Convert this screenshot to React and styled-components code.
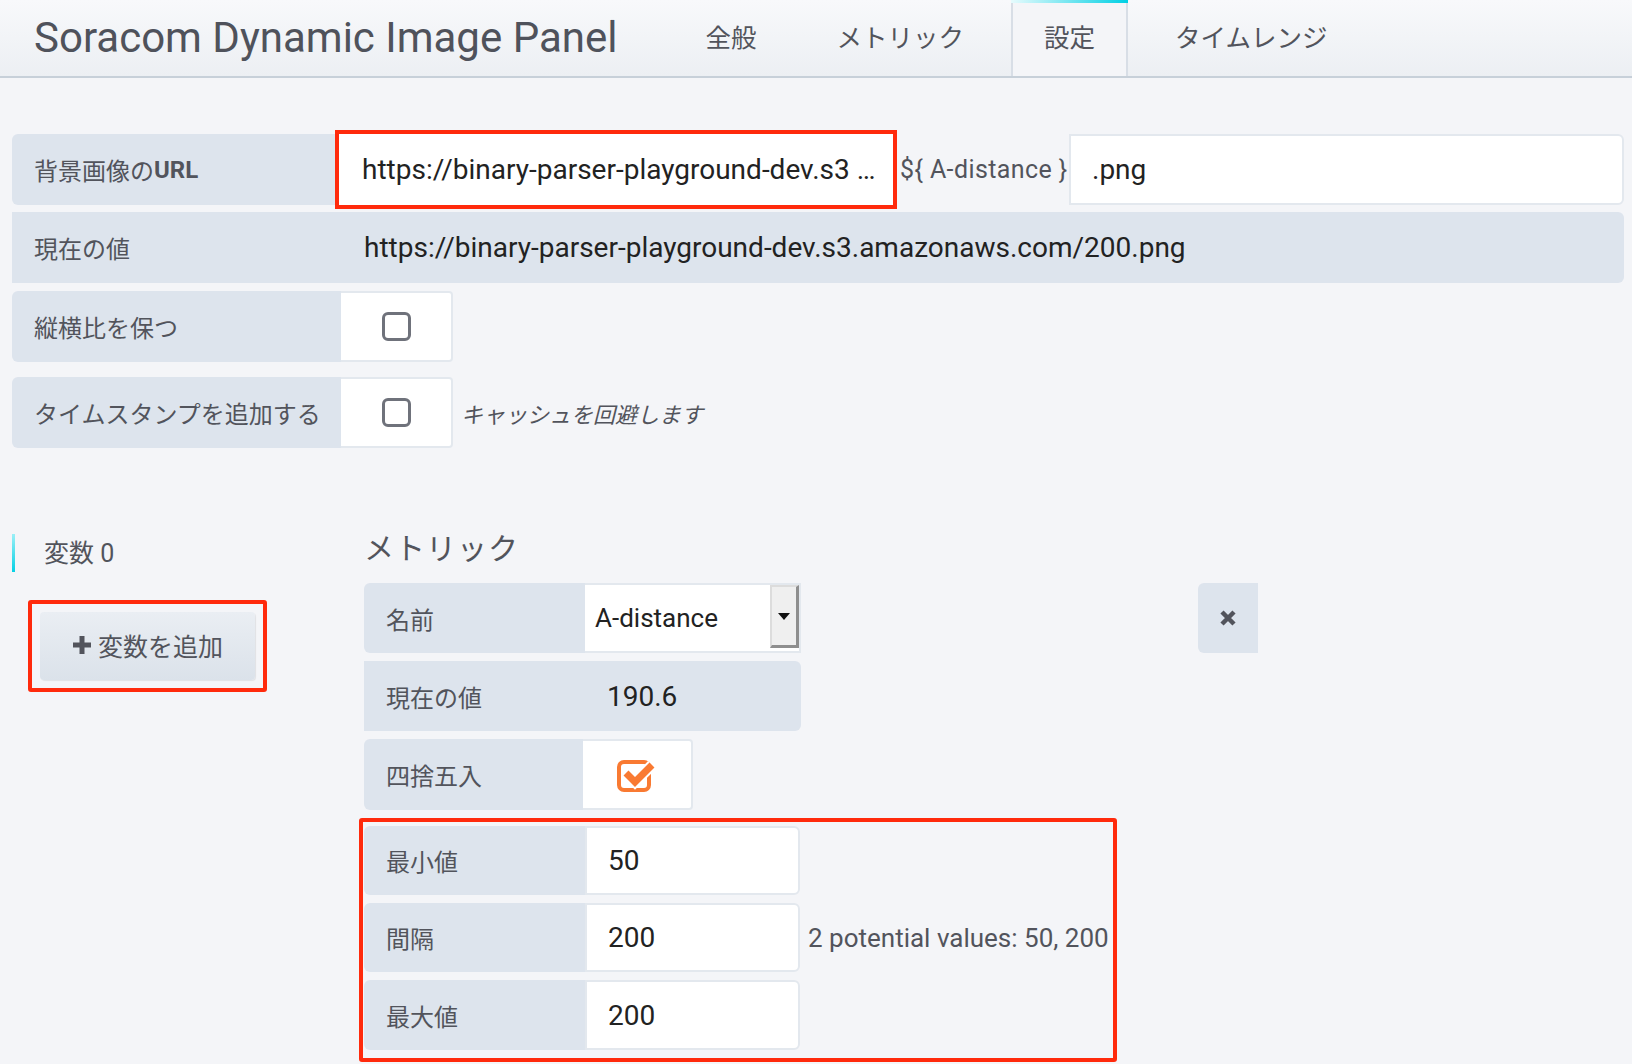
import React from 'react';
import styled, { createGlobalStyle } from 'styled-components';

const GlobalStyle = createGlobalStyle`
  body {
    margin: 0;
    background: #f4f5f8;
    font-family: Roboto, "Noto Sans CJK JP", sans-serif;
    color: #52545c;
  }
`;

const Header = styled.div`
  display: flex;
  height: 76px;
  background: linear-gradient(#f8f9fb, #eceff3);
  border-bottom: 2px solid #c7d0d9;
`;

const Title = styled.h1`
  margin: 0 55px 0 34px;
  font-size: 42px;
  font-weight: 400;
  line-height: 76px;
  color: #4f525b;
  white-space: nowrap;
`;

const Tabs = styled.div`
  display: flex;
  gap: 14px;
  align-self: flex-end;
`;

const Tab = styled.div`
  position: relative;
  height: 76px;
  padding: 0 31px;
  margin-bottom: ${(p) => (p.$active ? '-2px' : '0')};
  font-size: 25.5px;
  line-height: 76px;
  color: #52545c;
  background: ${(p) => (p.$active ? '#f4f5f8' : 'transparent')};
  border-left: 2px solid ${(p) => (p.$active ? '#d8dee6' : 'transparent')};
  border-right: 2px solid ${(p) => (p.$active ? '#d8dee6' : 'transparent')};
  box-sizing: border-box;

  &::before {
    content: '';
    display: ${(p) => (p.$active ? 'block' : 'none')};
    position: absolute;
    left: -2px;
    right: -2px;
    top: 0;
    height: 3px;
    background: linear-gradient(90deg, #e6fbfd, #00d0e4);
  }
`;

const Content = styled.div`
  padding: 56px 8px 0 12px;
`;

const Row = styled.div`
  display: flex;
  align-items: center;
  height: ${(p) => p.$h || 71}px;
  margin-top: ${(p) => p.$mt || 0}px;
  ${(p) => p.$fill && `
    background: #dde4ed;
    border-radius: 6px;
  `}
`;

const Label = styled.div`
  display: flex;
  align-items: center;
  align-self: stretch;
  width: ${(p) => p.$w}px;
  flex-shrink: 0;
  padding-left: 22px;
  box-sizing: border-box;
  background: #dde4ed;
  border-radius: ${(p) => (p.$fill ? '0' : '6px 0 0 6px')};
  font-size: 24px;
  color: #52545c;

  b {
    font-weight: 700;
  }
`;

const TextInput = styled.div`
  display: flex;
  align-items: center;
  align-self: stretch;
  width: ${(p) => p.$w}px;
  ${(p) => p.$grow && 'flex: 1;'}
  padding-left: 21px;
  box-sizing: border-box;
  background: #fff;
  border: 2px solid #e3e8ee;
  border-radius: ${(p) => (p.$round ? '0 6px 6px 0' : '0')};
  font-size: 28px;
  color: #222;
  white-space: nowrap;
  overflow: hidden;
  ${(p) => p.$marked && `
    border-color: #fff;
    outline: 4px solid #ff2a0c;
    outline-offset: 0;
  `}
`;

const Value = styled.div`
  padding-left: ${(p) => p.$pl}px;
  font-size: 28px;
  color: #222;
  white-space: nowrap;
`;

const Suffix = styled.span`
  width: 169px;
  margin-left: 7px;
  font-size: 25px;
  letter-spacing: 0.4px;
  color: #52545c;
  white-space: nowrap;
`;

const CheckCell = styled.div`
  display: flex;
  align-items: center;
  justify-content: center;
  align-self: stretch;
  width: ${(p) => p.$w}px;
  box-sizing: border-box;
  background: #fff;
  border: 2px solid #e3e8ee;
  border-left: none;
  border-radius: 0 4px 4px 0;
`;

const EmptyBox = styled.span`
  width: 29px;
  height: 29px;
  box-sizing: border-box;
  border: 3px solid #6f727b;
  border-radius: 6px;
`;

const Hint = styled.span`
  margin-left: 8px;
  font-size: 22px;
  font-style: italic;
  color: #52545c;
  white-space: nowrap;
`;

const Section = styled.div`
  display: flex;
  margin-top: 77px;
`;

const LeftCol = styled.div`
  width: 352px;
  flex-shrink: 0;
`;

const VarTitle = styled.div`
  margin-top: 9px;
  height: 38px;
  padding-left: 29px;
  border-left: 3px solid;
  border-image: linear-gradient(#9ff0f7, #00d0e4) 1;
  font-size: 25px;
  line-height: 40px;
  color: #52545c;
`;

const Marked = styled.div`
  display: inline-block;
  border: 4px solid #ff2a0c;
  border-radius: 3px;
  padding: ${(p) => p.$pad};
  margin: ${(p) => p.$m};
  width: ${(p) => (p.$w ? `${p.$w}px` : 'auto')};
  box-sizing: border-box;
`;

const AddButton = styled.button`
  display: flex;
  align-items: center;
  justify-content: center;
  gap: 6px;
  width: 215px;
  height: 68px;
  padding: 0 0 2px;
  border: none;
  border-radius: 4px;
  background: linear-gradient(#eaeef3, #dbe2ea);
  box-shadow: 1px 1px 1px rgba(0, 0, 0, 0.08);
  font-family: inherit;
  font-size: 25px;
  color: #52545c;
`;

const RightCol = styled.div`
  flex: 1;
`;

const SubTitle = styled.h3`
  margin: 4px 0 0;
  font-size: 30px;
  font-weight: 400;
  line-height: 40px;
  letter-spacing: 1px;
  color: #52545c;
`;

const MetricArea = styled.div`
  display: flex;
  align-items: flex-start;
  margin-top: 14px;
`;

const MetricCol = styled.div`
  display: flex;
  flex-direction: column;
  gap: 8px;
  width: 834px;
  flex-shrink: 0;
`;

const Group = styled.div`
  display: flex;
  flex-direction: column;
  gap: 8px;
`;

const SelectBox = styled.div`
  display: flex;
  align-items: stretch;
  align-self: stretch;
  background: #fff;
  border: 2px solid #e3e8ee;
  border-left: none;
`;

const SelectText = styled.div`
  display: flex;
  align-items: center;
  width: 175px;
  padding-left: 10px;
  font-size: 26px;
  color: #222;
`;

const DropButton = styled.div`
  display: flex;
  align-items: center;
  justify-content: center;
  width: 29px;
  margin: 0 0 3px 0;
  box-sizing: border-box;
  background: #efefef;
  border-top: 2px solid #dcdcdc;
  border-left: 2px solid #dcdcdc;
  border-right: 3px solid #8e8e8e;
  border-bottom: 3px solid #8e8e8e;

  &::after {
    content: '';
    border-left: 6px solid transparent;
    border-right: 6px solid transparent;
    border-top: 7px solid #111;
  }
`;

const RemoveButton = styled.div`
  display: flex;
  align-items: center;
  justify-content: center;
  width: 60px;
  height: 70px;
  background: #dde4ed;
  border-radius: 6px 0 0 6px;
`;

const HintPlain = styled.span`
  margin-left: 8px;
  font-size: 26px;
  color: #52545c;
  white-space: nowrap;
`;

const CheckedIcon = () => (
  <svg width="40" height="36" viewBox="0 0 40 36">
    <rect x="2" y="5" width="30" height="28" rx="5" fill="none" stroke="#f97a32" strokeWidth="4" />
    <path d="M9 16 L18 25 L35 8" fill="none" stroke="#fff" strokeWidth="11" />
    <path d="M9 16 L18 25 L35 8" fill="none" stroke="#f97a32" strokeWidth="7" strokeLinejoin="miter" />
  </svg>
);

const PlusIcon = () => (
  <svg width="20" height="20" viewBox="0 0 20 20">
    <path d="M10 1 V19 M1 10 H19" stroke="#52545c" strokeWidth="5" />
  </svg>
);

const CloseIcon = () => (
  <svg width="16" height="16" viewBox="0 0 16 16">
    <path d="M2 2 L14 14 M14 2 L2 14" stroke="#52545c" strokeWidth="4.5" />
  </svg>
);

export default function App() {
  return (
    <>
      <GlobalStyle />
      <Header>
        <Title>Soracom Dynamic Image Panel</Title>
        <Tabs>
          <Tab>全般</Tab>
          <Tab>メトリック</Tab>
          <Tab $active>設定</Tab>
          <Tab>タイムレンジ</Tab>
        </Tabs>
      </Header>

      <Content>
        <Row>
          <Label $w={327}>
            背景画像の<b>URL</b>
          </Label>
          <TextInput $w={554} $marked>
            https://binary-parser-playground-dev.s3 …
          </TextInput>
          <Suffix>{'${ A-distance }'}</Suffix>
          <TextInput $grow $round>.png</TextInput>
        </Row>
        <Row $fill $mt={7}>
          <Label $w={323} $fill>現在の値</Label>
          <Value $pl={29}>https://binary-parser-playground-dev.s3.amazonaws.com/200.png</Value>
        </Row>
        <Row $mt={8}>
          <Label $w={329}>縦横比を保つ</Label>
          <CheckCell $w={112}>
            <EmptyBox />
          </CheckCell>
        </Row>
        <Row $mt={15}>
          <Label $w={329}>タイムスタンプを追加する</Label>
          <CheckCell $w={112}>
            <EmptyBox />
          </CheckCell>
          <Hint>キャッシュを回避します</Hint>
        </Row>

        <Section>
          <LeftCol>
            <VarTitle>変数 0</VarTitle>
            <Marked $pad="8px" $m="28px 0 0 16px">
              <AddButton>
                <PlusIcon />
                変数を追加
              </AddButton>
            </Marked>
          </LeftCol>

          <RightCol>
            <SubTitle>メトリック</SubTitle>
            <MetricArea>
              <MetricCol>
                <Row $h={70}>
                  <Label $w={221}>名前</Label>
                  <SelectBox>
                    <SelectText>A-distance</SelectText>
                    <DropButton />
                  </SelectBox>
                </Row>
                <Row $h={70} $fill style={{ width: 437 }}>
                  <Label $w={221} $fill>現在の値</Label>
                  <Value $pl={22}>190.6</Value>
                </Row>
                <Row>
                  <Label $w={219}>四捨五入</Label>
                  <CheckCell $w={110}>
                    <CheckedIcon />
                  </CheckCell>
                </Row>
                <Marked $pad="4px 0 8px 1px" $m="0 0 0 -5px" $w={758}>
                  <Group>
                    <Row $h={69}>
                      <Label $w={221}>最小値</Label>
                      <TextInput $w={215} $round>50</TextInput>
                    </Row>
                    <Row $h={69}>
                      <Label $w={221}>間隔</Label>
                      <TextInput $w={215} $round>200</TextInput>
                      <HintPlain>2 potential values: 50, 200</HintPlain>
                    </Row>
                    <Row $h={70}>
                      <Label $w={221}>最大値</Label>
                      <TextInput $w={215} $round>200</TextInput>
                    </Row>
                  </Group>
                </Marked>
              </MetricCol>
              <RemoveButton>
                <CloseIcon />
              </RemoveButton>
            </MetricArea>
          </RightCol>
        </Section>
      </Content>
    </>
  );
}
